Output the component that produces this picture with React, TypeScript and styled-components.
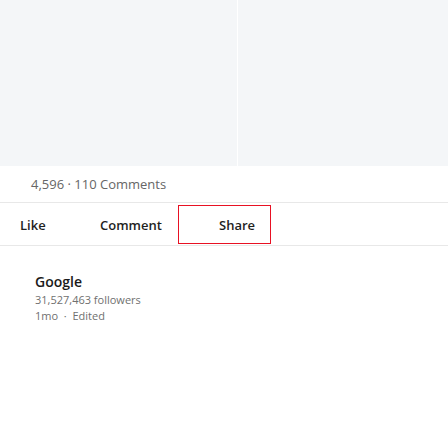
import React from "react";
import styled, { createGlobalStyle } from "styled-components";

const Global = createGlobalStyle`
  html, body { margin: 0; padding: 0; background: #ffffff; }
  body { font-family: "Open Sans", "Noto Sans", sans-serif; }
`;

const Page = styled.div`
  width: 448px;
  height: 448px;
  display: flex;
  flex-direction: column;
  background: #ffffff;
  overflow: hidden;
`;

const Media = styled.div`
  height: 166px;
  flex: none;
  display: grid;
  grid-template-columns: 237px 1fr;
  column-gap: 1px;
  background: #ffffff;
`;

const MediaPane = styled.div`
  background: #f4f6f8;
`;

const Stats = styled.div`
  height: 37px;
  flex: none;
  box-sizing: border-box;
  display: flex;
  align-items: center;
  padding-left: 31px;
  font-size: 13px;
  color: #666666;
  border-bottom: 1px solid #e8e8e8;
`;

const Actions = styled.div`
  display: flex;
  flex: none;
  align-items: stretch;
  height: 43px;
  box-sizing: border-box;
  padding: 2px 0 1px 4px;
  border-bottom: 1px solid #e8e8e8;
`;

const ActionButton = styled.button<{ $lead: number; $width: number; $focused?: boolean }>`
  appearance: none;
  display: flex;
  align-items: center;
  box-sizing: border-box;
  width: ${(p) => p.$width}px;
  padding: 0 0 0 ${(p) => p.$lead}px;
  margin: 0;
  background: transparent;
  border-width: 1px;
  border-style: solid;
  border-color: ${(p) => (p.$focused ? "#e81123" : "transparent")};
  border-radius: 0;
  outline: none;
  font-family: "Open Sans", "Noto Sans", sans-serif;
  font-size: 13px;
  font-weight: 600;
  color: #1f1f1f;
  cursor: pointer;
`;

const Author = styled.div`
  display: flex;
  flex-direction: column;
  padding: 26px 0 0 35px;
`;

const AuthorName = styled.div`
  font-size: 14px;
  font-weight: 600;
  color: #1a1a1a;
  line-height: 20px;
`;

const Meta = styled.div`
  font-size: 11px;
  color: #707070;
  line-height: 16px;
`;

export default function App() {
  return (
    <Page>
      <Global />
      <Media>
        <MediaPane />
        <MediaPane />
      </Media>
      <Stats>4,596 · 110 Comments</Stats>
      <Actions>
        <ActionButton $lead={15} $width={55}>Like</ActionButton>
        <ActionButton $lead={40} $width={119}>Comment</ActionButton>
        <ActionButton $lead={40} $width={93} $focused>Share</ActionButton>
      </Actions>
      <Author>
        <AuthorName>Google</AuthorName>
        <Meta>31,527,463 followers</Meta>
        <Meta>1mo &nbsp;·&nbsp; Edited</Meta>
      </Author>
    </Page>
  );
}
